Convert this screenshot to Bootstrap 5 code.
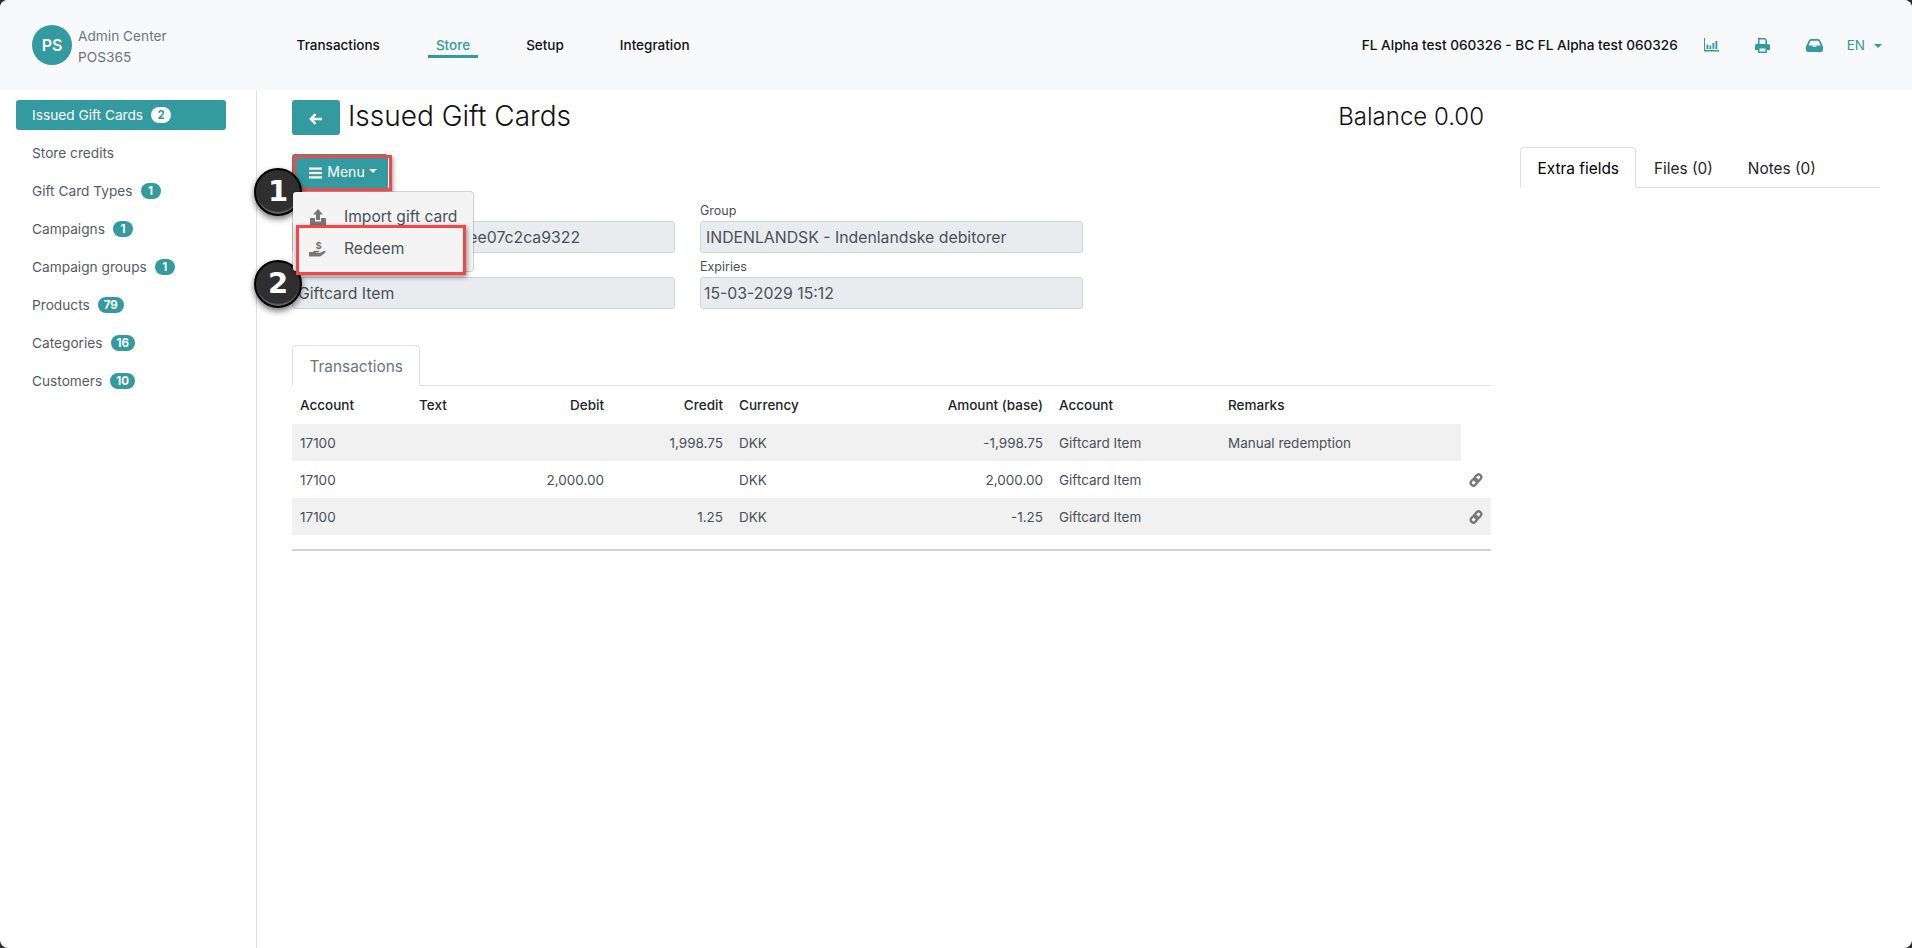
<!DOCTYPE html>
<html lang="en">
<head>
  <meta charset="UTF-8" />
  <meta name="viewport" content="width=device-width, initial-scale=1.0"/>
  <title>Issued Gift Cards</title>
  <link href="https://cdn.jsdelivr.net/npm/bootstrap@5.3.3/dist/css/bootstrap.min.css" rel="stylesheet">
  <style>
    html, body {
      height: 100%;
      background-color: #2b2b2b;
    }
    body {
      font-family: "Inter", "Liberation Sans", sans-serif;
      font-size: 14px;
      color: #495057;
      overflow: hidden;
    }
    .app-shell {
      height: 948px;
      background-color: #fff;
      border-radius: 8px;
      overflow: hidden;
    }
    .top-bar {
      height: 90px;
      background-color: #f8f9fb;
      padding: 0 30px 0 32px;
    }
    .avatar {
      width: 40px;
      height: 40px;
      background-color: #339a9f;
      color: #fff;
      font-size: 16px;
      font-weight: 600;
    }
    .brand-text {
      margin-left: 6px;
      padding-top: 4px;
      font-size: 13.7px;
      line-height: 21px;
      color: #6c757d;
    }
    .top-menu {
      margin-left: 130px;
      padding-top: 3px;
      gap: 56px;
    }
    .top-menu a {
      color: #111;
      font-size: 13.5px;
      font-weight: 500;
      text-decoration: none;
      padding: 0 8px;
      margin: 0 -8px;
      border-bottom: 3px solid transparent;
    }
    .top-menu a.current {
      color: #339a9f;
      border-bottom-color: #339a9f;
    }
    .company {
      color: #111;
      font-size: 13.6px;
      font-weight: 500;
    }
    .top-icons {
      color: #339a9f;
      gap: 36px;
      margin-left: 25px;
    }
    .lang {
      margin-left: -12px;
      color: #339a9f;
      font-size: 13.5px;
    }
    .lang::after {
      display: inline-block;
      margin-left: 9px;
      vertical-align: 2px;
      content: "";
      border-top: 4px solid;
      border-left: 4px solid transparent;
      border-right: 4px solid transparent;
    }
    .side-col {
      width: 257px;
      height: 858px;
      padding: 10px 30px 0 16px;
      border-right: 1px solid #dee2e6;
      flex-shrink: 0;
    }
    .side-link {
      display: flex;
      align-items: center;
      gap: 8px;
      height: 30px;
      margin-bottom: 8px;
      padding-left: 16px;
      border-radius: 3px;
      color: #555c63;
      font-size: 13.7px;
      text-decoration: none;
    }
    .side-link.current {
      background-color: #339a9f;
      color: #fff;
    }
    .count {
      padding: 3px 6px;
      min-width: 20px;
      background-color: #339a9f;
      color: #fff;
      font-size: 11.5px;
      font-weight: 700;
      line-height: 10px;
    }
    .side-link.current .count {
      background-color: #fff;
      color: #339a9f;
    }
    .main-col {
      padding: 10px 28px 0 35px;
      gap: 29px;
    }
    .left-pane {
      width: 1199px;
      flex-shrink: 0;
    }
    .right-pane {
      width: 360px;
      padding-top: 47px;
    }
    .back-btn {
      width: 48px;
      height: 35px;
      background-color: #339a9f;
      border-radius: 3px;
      border: 0;
      color: #fff;
      padding: 0;
    }
    .page-title {
      margin: -3px 0 0 8px;
      font-size: 28px;
      font-weight: 300;
      color: #111;
      line-height: 35px;
    }
    .balance {
      margin: -3px 7px 0 0;
      font-size: 24px;
      font-weight: 300;
      color: #111;
      line-height: 35px;
    }
    .menu-wrap {
      width: 96px;
      height: 36px;
      margin-top: 19px;
      z-index: 5;
    }
    .menu-btn {
      width: 96px;
      height: 36px;
      padding: 0 0 2px 6px;
      background-color: #339a9f;
      border: 0;
      border-radius: 3px;
      color: #fff;
      font-size: 14px;
    }
    .menu-btn .bars {
      margin-right: 5px;
      vertical-align: -2px;
    }
    .menu-btn .dropdown-toggle::after {
      margin-left: 4px;
    }
    .pop-menu {
      top: 37px;
      left: 0;
      width: 182px;
      height: 81px;
      padding: 6px 0 0;
      background-color: #f4f4f4;
      border-radius: 4px;
      font-size: 15.6px;
    }
    .pop-item {
      display: flex;
      align-items: center;
      height: 38px;
      padding-left: 16px;
      color: #495057;
      text-decoration: none;
    }
    .pop-item svg {
      width: 18px;
      flex-shrink: 0;
      margin-right: 17px;
    }
    .pop-item.picked {
      position: relative;
      width: 170px;
      height: 50px;
      margin: -11px 0 0 3px;
      padding: 0 0 2px 10px;
      background-color: #f4f4f4;
      border: 3px solid #f44749;
      box-shadow: 1px 2px 5px rgba(0, 0, 0, .45);
    }
    .red-box {
      top: 1px;
      left: 1px;
      width: 99px;
      height: 36px;
      border: 3px solid #f44749;
      box-shadow: 1px 2px 4px rgba(0, 0, 0, .4);
      pointer-events: none;
    }
    .step-dot {
      left: -38px;
      width: 48px;
      height: 48px;
      background-color: #2f2f2f;
      border: 2px solid #000;
      color: #fff;
      font-family: "DejaVu Sans", sans-serif;
      font-size: 29px;
      font-weight: 700;
      box-shadow: inset 0 -3px 1px -1px #666, 0 3px 6px rgba(0, 0, 0, .55);
      z-index: 6;
    }
    .step-one { top: 14px; }
    .step-two { top: 106px; }
    .info-grid {
      display: grid;
      grid-template-columns: 383px 383px;
      column-gap: 25px;
      row-gap: 5px;
      margin-top: 12px;
    }
    .field-label {
      display: block;
      margin: 0 0 2px;
      font-size: 12.5px;
      line-height: 17px;
      color: #495057;
    }
    .info-grid .form-control {
      height: 32px;
      padding: 0 5px;
      background-color: #e9ecef;
      border-color: #ced4da;
      border-radius: 3px;
      font-size: 15.8px;
      color: #495057;
      opacity: 1;
    }
    .info-grid .form-control.date-field {
      padding-left: 3px;
    }
    .tab-row {
      margin-top: 36px;
      border-bottom-color: #dee2e6;
    }
    .tab-row .nav-link, .side-tabs .nav-link {
      height: 41px;
      padding: 9px 16.5px;
      font-size: 15.4px;
      border-radius: 4px 4px 0 0;
    }
    .tab-row .nav-link, .tab-row .nav-link.active {
      color: #6c757d;
    }
    .side-tabs .nav-link {
      color: #212529;
    }
    .side-tabs .nav-link.plain {
      border-color: transparent;
    }
    .tx-wrap {
      padding-bottom: 14px;
      border-bottom: 2px solid #d2d2d2;
    }
    .tx-table {
      table-layout: fixed;
      width: 1199px;
      margin: 0;
      font-size: 13.5px;
      --bs-table-striped-bg: #f1f1f1;
      --bs-table-color: #495057;
      --bs-table-striped-color: #495057;
    }
    .tx-table td, .tx-table th {
      height: 37px;
      padding: 1px 8px 0;
      vertical-align: middle;
      border: 0;
      white-space: nowrap;
    }
    .tx-table thead th {
      height: 38px;
      font-weight: 500;
      color: #212529;
    }
    .tx-table .w-a { width: 119px; }
    .tx-table .w-b { width: 100px; }
    .tx-table .w-c { width: 101px; }
    .tx-table .w-d { width: 220px; }
    .tx-table .w-e { width: 169px; }
    .tx-table .w-f { width: 241px; }
    .tx-table .w-g { width: 30px; }
    .link-ico {
      display: block;
      margin: 0 auto;
      color: #777;
    }
  </style>
</head>
<body>
  <div class="app-shell">
    <header class="top-bar d-flex align-items-center">
      <div class="avatar rounded-circle d-flex align-items-center justify-content-center">PS</div>
      <div class="brand-text">Admin Center<br>POS365</div>
      <nav class="top-menu d-flex">
        <a href="#">Transactions</a>
        <a href="#" class="current">Store</a>
        <a href="#">Setup</a>
        <a href="#">Integration</a>
      </nav>
      <div class="company ms-auto">FL Alpha test 060326 - BC FL Alpha test 060326</div>
      <div class="top-icons d-flex align-items-center">
        <svg width="16" height="14" viewBox="0 0 16 14" fill="currentColor"><path d="M1 0h1v12h14v1.500H1z"/><rect x="3.500" y="6.500" width="1.800" height="4.500"/><rect x="6.500" y="7.500" width="1.800" height="3.500"/><rect x="9.500" y="5" width="1.800" height="6"/><rect x="12.500" y="3" width="1.800" height="8"/></svg>
        <svg width="15" height="15" viewBox="0 0 15 15" fill="currentColor"><path d="M3 0h7l2 2v4h1.200c1 0 1.800.8 1.800 1.800V12h-3v3H3v-3H0V7.800C0 6.800.8 6 1.800 6H3zm1.500 1.500V6h6V2.600l-1-1.100zm0 9V13.500h6v-3z"/></svg>
        <svg width="17" height="14" viewBox="0 0 17 14" fill="currentColor"><path d="M0 8.500 3 2.200Q3.600 1 5.500 1h6q1.900 0 2.500 1.200l3 6.300V12q0 2-2 2H2q-2 0-2-2zM5.500 2.800Q4.600 2.800 4.300 3.400L2.400 7.500h12.200L12.700 3.400Q12.400 2.800 11.500 2.800z"/><path d="M6 7.500h5l-.8 1.200H6.800z" fill="#f8f9fb"/></svg>
        <span class="lang">EN</span>
      </div>
    </header>

    <div class="d-flex">
      <aside class="side-col">
        <a href="#" class="side-link current">Issued Gift Cards <span class="count badge rounded-pill">2</span></a>
        <a href="#" class="side-link">Store credits</a>
        <a href="#" class="side-link">Gift Card Types <span class="count badge rounded-pill">1</span></a>
        <a href="#" class="side-link">Campaigns <span class="count badge rounded-pill">1</span></a>
        <a href="#" class="side-link">Campaign groups <span class="count badge rounded-pill">1</span></a>
        <a href="#" class="side-link">Products <span class="count badge rounded-pill">79</span></a>
        <a href="#" class="side-link">Categories <span class="count badge rounded-pill">16</span></a>
        <a href="#" class="side-link">Customers <span class="count badge rounded-pill">10</span></a>
      </aside>

      <main class="main-col d-flex flex-grow-1">
        <div class="left-pane">
          <div class="d-flex align-items-center">
            <button class="back-btn" type="button">
              <svg width="14" height="12" viewBox="0 0 14 12" fill="none" stroke="currentColor" stroke-width="2.400"><path d="M13 6H2M6.500 1.200 1.800 6l4.700 4.800"/></svg>
            </button>
            <h1 class="page-title">Issued Gift Cards</h1>
            <div class="balance ms-auto">Balance 0.00</div>
          </div>

          <div class="menu-wrap position-relative">
            <button class="menu-btn" type="button">
              <svg class="bars" width="13" height="12" viewBox="0 0 13 12" fill="currentColor"><rect y="0.500" width="13" height="2.200"/><rect y="4.900" width="13" height="2.200"/><rect y="9.300" width="13" height="2.200"/></svg>Menu<span class="dropdown-toggle"></span>
            </button>
            <span class="red-box position-absolute"></span>
            <span class="step-dot step-one position-absolute rounded-circle d-flex align-items-center justify-content-center">1</span>
            <span class="step-dot step-two position-absolute rounded-circle d-flex align-items-center justify-content-center">2</span>
            <div class="dropdown-menu show pop-menu">
              <a href="#" class="pop-item">
                <svg height="17" viewBox="0 0 18 17" fill="#777"><path d="M9 0l5 5.500h-3V11H7V5.500H4zM1 9h5v3.500h6V9h5v8H1z"/></svg>
                Import gift card
              </a>
              <a href="#" class="pop-item picked">
                <svg height="18" viewBox="0 0 18 17" fill="#777"><path d="M0 11.500h3.500l2-1.200h4c.8 0 1.200 1.600 0 1.600H7v.7h3.500L15 10.500c1.300-.4 2.300.6 1.400 1.500L12 15.500c-.4.300-.8.500-1.300.5H0z"/><text x="9.500" y="8" font-size="9.500" font-weight="700" text-anchor="middle" font-family="Inter, sans-serif">$</text></svg>
                Redeem
              </a>
            </div>
          </div>

          <div class="info-grid">
            <div>
              <label class="field-label">Number</label>
              <input class="form-control" type="text" value="3f7a91c4b2d84e6fa08ee07c2ca9322" disabled>
            </div>
            <div>
              <label class="field-label">Group</label>
              <input class="form-control" type="text" value="INDENLANDSK - Indenlandske debitorer" disabled>
            </div>
            <div>
              <label class="field-label">Item</label>
              <input class="form-control" type="text" value="Giftcard Item" disabled>
            </div>
            <div>
              <label class="field-label">Expiries</label>
              <input class="form-control date-field" type="text" value="15-03-2029 15:12" disabled>
            </div>
          </div>

          <ul class="nav nav-tabs tab-row">
            <li class="nav-item"><a class="nav-link active" href="#">Transactions</a></li>
          </ul>

          <div class="tx-wrap">
            <table class="table table-striped tx-table">
              <thead>
                <tr>
                  <th class="w-a">Account</th>
                  <th class="w-b">Text</th>
                  <th class="w-c text-end">Debit</th>
                  <th class="w-a text-end">Credit</th>
                  <th class="w-b">Currency</th>
                  <th class="w-d text-end">Amount (base)</th>
                  <th class="w-e">Account</th>
                  <th class="w-f">Remarks</th>
                  <th class="w-g"></th>
                </tr>
              </thead>
              <tbody>
                <tr>
                  <td>17100</td><td></td><td></td><td class="text-end">1,998.75</td><td>DKK</td><td class="text-end">-1,998.75</td><td>Giftcard Item</td><td>Manual redemption</td>
                </tr>
                <tr>
                  <td>17100</td><td></td><td class="text-end">2,000.00</td><td></td><td>DKK</td><td class="text-end">2,000.00</td><td>Giftcard Item</td><td></td>
                  <td class="p-0"><svg class="link-ico" width="14" height="14" viewBox="0 0 14 14" fill="none" stroke="currentColor" stroke-width="2.300"><g transform="rotate(-48 7 7)"><rect x="0.500" y="4.300" width="7.500" height="5.400" rx="2.700"/><rect x="6" y="4.300" width="7.500" height="5.400" rx="2.700"/></g></svg></td>
                </tr>
                <tr>
                  <td>17100</td><td></td><td></td><td class="text-end">1.25</td><td>DKK</td><td class="text-end">-1.25</td><td>Giftcard Item</td><td></td>
                  <td class="p-0"><svg class="link-ico" width="14" height="14" viewBox="0 0 14 14" fill="none" stroke="currentColor" stroke-width="2.300"><g transform="rotate(-48 7 7)"><rect x="0.500" y="4.300" width="7.500" height="5.400" rx="2.700"/><rect x="6" y="4.300" width="7.500" height="5.400" rx="2.700"/></g></svg></td>
                </tr>
              </tbody>
            </table>
          </div>
        </div>

        <div class="right-pane">
          <ul class="nav nav-tabs side-tabs">
            <li class="nav-item"><a class="nav-link active" href="#">Extra fields</a></li>
            <li class="nav-item"><a class="nav-link plain" href="#">Files (0)</a></li>
            <li class="nav-item"><a class="nav-link plain" href="#">Notes (0)</a></li>
          </ul>
        </div>
      </main>
    </div>
  </div>
  <script src="https://cdn.jsdelivr.net/npm/bootstrap@5.3.3/dist/js/bootstrap.bundle.min.js"></script>
</body>
</html>
